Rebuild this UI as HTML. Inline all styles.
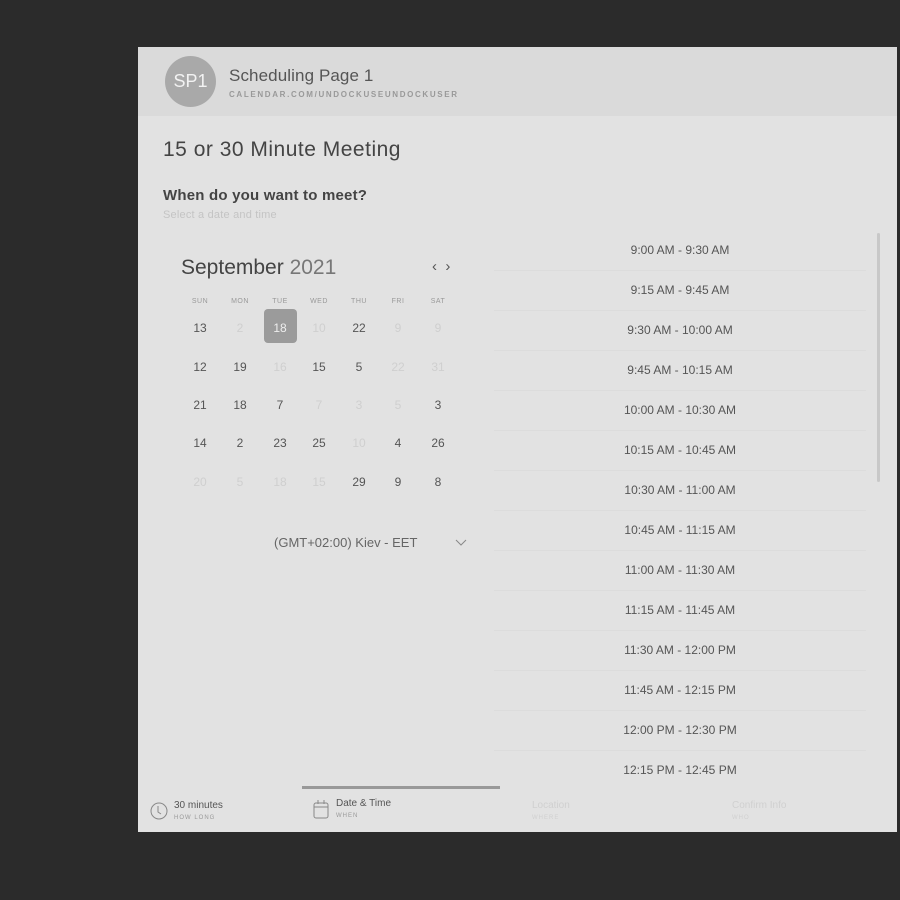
<!DOCTYPE html>
<html><head><style>
body{margin:0;width:900px;height:900px;background:#2b2b2b;font-family:"Liberation Sans","DejaVu Sans",sans-serif;position:relative;overflow:hidden}
.p{position:absolute;left:138px;top:47px;width:759px;height:785px;background:#e2e2e2}
.h{position:absolute;left:0;top:0;width:759px;height:69px;background:#dadada}
.a{position:absolute;left:27px;top:9px;width:51px;height:51px;border-radius:50%;background:#a9a9a9;color:#f2f2f2;font-size:18px;line-height:51px;text-align:center}
.t{position:absolute;color:#555;white-space:nowrap}
.d{position:absolute;width:40px;text-align:center;font-size:12px;color:#555}
.l{color:#cfcfcf}
.w{position:absolute;width:40px;text-align:center;font-size:7px;color:#999;letter-spacing:.5px}
.ts{position:absolute;left:356px;width:372px;height:40px;line-height:40px;text-align:center;font-size:12px;color:#555;border-bottom:1px solid #dcdcdc}
</style></head><body>
<div class="p">
<div class="h">
<div class="a">SP1</div>
<div class="t" style="left:91px;top:19px;font-size:17px;color:#555;letter-spacing:.1px">Scheduling Page 1</div>
<div class="t" style="left:91px;top:43px;font-size:8px;color:#999;letter-spacing:1.65px;font-weight:bold">CALENDAR.COM/UNDOCKUSEUNDOCKUSER</div>
</div>
<div class="t" style="left:25px;top:91px;font-size:21px;color:#444;letter-spacing:.5px">15 or 30 Minute Meeting</div>
<div class="t" style="left:25px;top:140px;font-size:15px;font-weight:bold;color:#444;letter-spacing:.2px">When do you want to meet?</div>
<div class="t" style="left:25px;top:162px;font-size:11px;color:#c4c4c4;letter-spacing:.2px">Select a date and time</div>
<div class="t" style="left:43px;top:209px;font-size:21px;color:#444">September <span style="color:#777">2021</span></div>
<div class="t" style="left:294px;top:211px;font-size:15px;color:#555">‹&nbsp;&nbsp;›</div>
<div class="w" style="left:42px;top:251px">SUN</div><div class="w" style="left:82px;top:251px">MON</div><div class="w" style="left:122px;top:251px">TUE</div><div class="w" style="left:161px;top:251px">WED</div><div class="w" style="left:201px;top:251px">THU</div><div class="w" style="left:240px;top:251px">FRI</div><div class="w" style="left:280px;top:251px">SAT</div>
<div style="position:absolute;left:126px;top:262px;width:33px;height:34px;background:#9b9b9b;border-radius:4px"></div>
<div class="d" style="left:42px;top:274px">13</div><div class="d l" style="left:82px;top:274px">2</div><div class="d" style="left:122px;top:274px;color:#eee">18</div><div class="d l" style="left:161px;top:274px">10</div><div class="d" style="left:201px;top:274px">22</div><div class="d l" style="left:240px;top:274px">9</div><div class="d l" style="left:280px;top:274px">9</div>
<div class="d" style="left:42px;top:313px">12</div><div class="d" style="left:82px;top:313px">19</div><div class="d l" style="left:122px;top:313px">16</div><div class="d" style="left:161px;top:313px">15</div><div class="d" style="left:201px;top:313px">5</div><div class="d l" style="left:240px;top:313px">22</div><div class="d l" style="left:280px;top:313px">31</div>
<div class="d" style="left:42px;top:351px">21</div><div class="d" style="left:82px;top:351px">18</div><div class="d" style="left:122px;top:351px">7</div><div class="d l" style="left:161px;top:351px">7</div><div class="d l" style="left:201px;top:351px">3</div><div class="d l" style="left:240px;top:351px">5</div><div class="d" style="left:280px;top:351px">3</div>
<div class="d" style="left:42px;top:389px">14</div><div class="d" style="left:82px;top:389px">2</div><div class="d" style="left:122px;top:389px">23</div><div class="d" style="left:161px;top:389px">25</div><div class="d l" style="left:201px;top:389px">10</div><div class="d" style="left:240px;top:389px">4</div><div class="d" style="left:280px;top:389px">26</div>
<div class="d l" style="left:42px;top:428px">20</div><div class="d l" style="left:82px;top:428px">5</div><div class="d l" style="left:122px;top:428px">18</div><div class="d l" style="left:161px;top:428px">15</div><div class="d" style="left:201px;top:428px">29</div><div class="d" style="left:240px;top:428px">9</div><div class="d" style="left:280px;top:428px">8</div>
<div class="t" style="left:136px;top:488px;font-size:13px;color:#666">(GMT+02:00) Kiev - EET</div>
<svg style="position:absolute;left:317px;top:492px" width="12" height="8"><path d="M1 1l5 5 5-5" fill="none" stroke="#888"/></svg>
<div class="ts" style="top:183px">9:00 AM - 9:30 AM</div>
<div class="ts" style="top:223px">9:15 AM - 9:45 AM</div>
<div class="ts" style="top:263px">9:30 AM - 10:00 AM</div>
<div class="ts" style="top:303px">9:45 AM - 10:15 AM</div>
<div class="ts" style="top:343px">10:00 AM - 10:30 AM</div>
<div class="ts" style="top:383px">10:15 AM - 10:45 AM</div>
<div class="ts" style="top:423px">10:30 AM - 11:00 AM</div>
<div class="ts" style="top:463px">10:45 AM - 11:15 AM</div>
<div class="ts" style="top:503px">11:00 AM - 11:30 AM</div>
<div class="ts" style="top:543px">11:15 AM - 11:45 AM</div>
<div class="ts" style="top:583px">11:30 AM - 12:00 PM</div>
<div class="ts" style="top:623px">11:45 AM - 12:15 PM</div>
<div class="ts" style="top:663px">12:00 PM - 12:30 PM</div>
<div class="ts" style="top:703px;border:none">12:15 PM - 12:45 PM</div>
<div style="position:absolute;left:739px;top:186px;width:3px;height:249px;background:#c8c8c8;border-radius:2px"></div>
<div style="position:absolute;left:164px;top:739px;width:198px;height:3px;background:#999"></div>
<svg style="position:absolute;left:12px;top:755px" width="18" height="18"><circle cx="9" cy="9" r="8" fill="none" stroke="#888"/><path d="M8 4v6l3 2" fill="none" stroke="#888"/></svg>
<div class="t" style="left:36px;top:753px;font-size:10px;color:#555">30 minutes</div>
<div class="t" style="left:36px;top:768px;font-size:6px;color:#999;letter-spacing:1px">HOW LONG</div>
<svg style="position:absolute;left:175px;top:752px" width="16" height="20"><rect x="1" y="4" width="14" height="15" rx="2" fill="none" stroke="#888"/><path d="M1 8h14M5 1v4M11 1v4" stroke="#888"/></svg>
<div class="t" style="left:198px;top:751px;font-size:10px;color:#555">Date &amp; Time</div>
<div class="t" style="left:198px;top:766px;font-size:6px;color:#999;letter-spacing:1px">WHEN</div>
<div class="t" style="left:394px;top:753px;font-size:10px;color:#d0d0d0">Location</div>
<div class="t" style="left:394px;top:768px;font-size:6px;color:#d0d0d0;letter-spacing:1px">WHERE</div>
<div class="t" style="left:594px;top:753px;font-size:10px;color:#d0d0d0">Confirm Info</div>
<div class="t" style="left:594px;top:768px;font-size:6px;color:#d0d0d0;letter-spacing:1px">WHO</div>
</div>
</body></html>
